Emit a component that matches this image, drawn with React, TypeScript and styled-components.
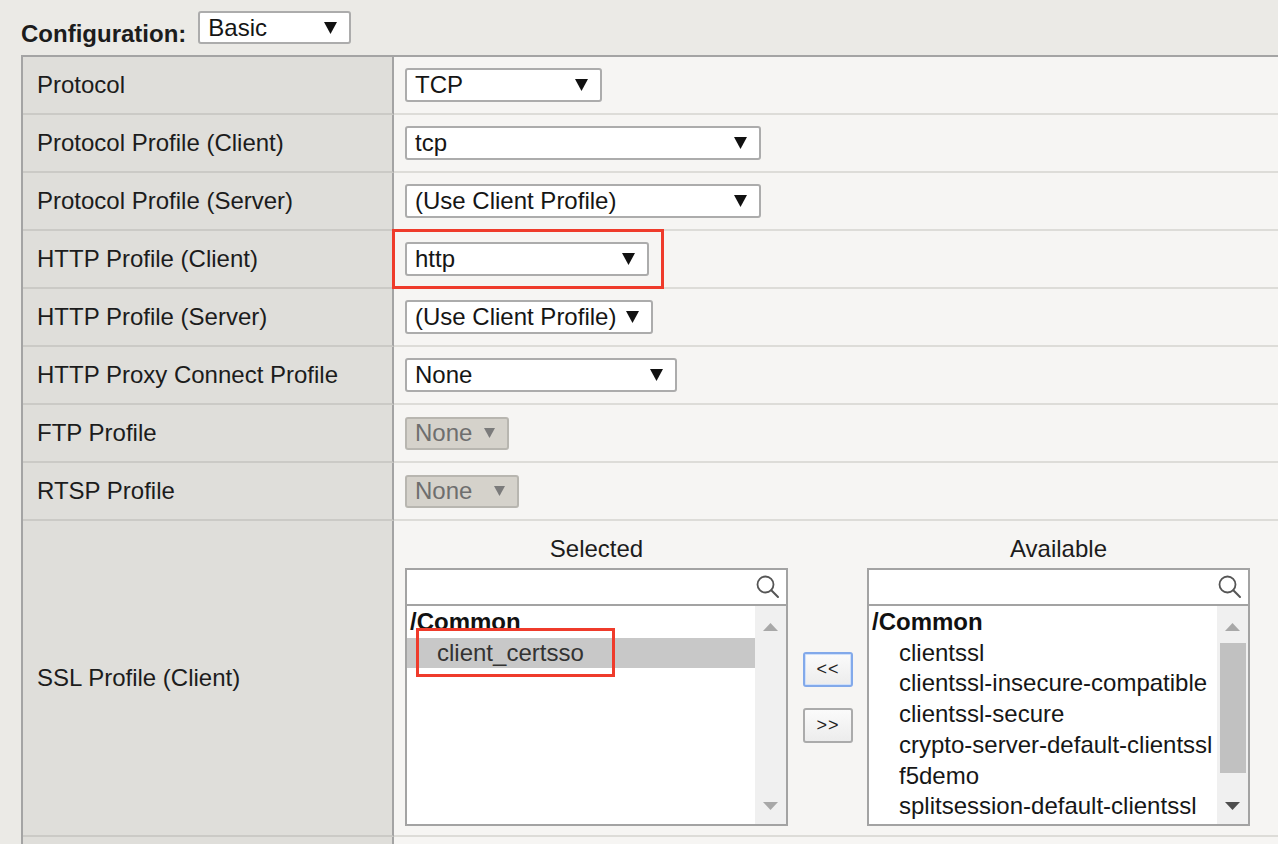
import React from "react";
import styled, { createGlobalStyle } from "styled-components";

const Global = createGlobalStyle`
  html, body {
    margin: 0;
    padding: 0;
    height: 100%;
    overflow: hidden;
    background: #ebeae6;
  }
  body {
    font-family: "Liberation Sans", Arial, sans-serif;
    font-size: 24px;
    color: #1a1a1a;
  }
`;

const Page = styled.div`
  padding: 11px 0 0 21px;
  box-sizing: border-box;
  width: 1278px;
  height: 844px;
  overflow: hidden;
`;

const TopBar = styled.div`
  display: flex;
  align-items: flex-start;
  gap: 12px;
  height: 33px;
`;

const TopLabel = styled.span`
  font-weight: bold;
  line-height: 28px;
  margin-top: 9px;
  color: #1c1c1c;
`;

const Table = styled.div`
  margin-top: 11px;
  border-top: 2px solid #a4a4a4;
  border-left: 2px solid #a4a4a4;
  display: flex;
  flex-direction: column;
`;

const Row = styled.div`
  display: grid;
  grid-template-columns: 371px 1fr;
`;

const LabelCell = styled.div<{ $h: number }>`
  background: #dfdeda;
  border-right: 2px solid #a4a4a4;
  border-bottom: 2px solid #cbcac6;
  min-height: ${(p) => p.$h}px;
  display: flex;
  align-items: center;
  padding-left: 14px;
  color: #1c1c1c;
`;

const ValueCell = styled.div<{ $h: number }>`
  background: #f6f5f3;
  border-bottom: 2px solid #dddcd8;
  min-height: ${(p) => p.$h}px;
  display: flex;
  align-items: center;
  padding-left: 11px;
`;

const SslCell = styled.div`
  background: #f6f5f3;
  border-bottom: 2px solid #dddcd8;
  padding: 14px 0 9px 11px;
  display: flex;
  align-items: flex-start;
`;

const SelectBox = styled.div<{ $w: number; $h?: number; $disabled?: boolean }>`
  box-sizing: border-box;
  width: ${(p) => p.$w}px;
  height: ${(p) => p.$h ?? 34}px;
  display: flex;
  align-items: center;
  justify-content: space-between;
  padding: 0 12px 0 8px;
  border: 2px solid ${(p) => (p.$disabled ? "#b8b6b0" : "#acacac")};
  border-radius: 3px;
  background: ${(p) => (p.$disabled ? "#d5d2cb" : "#ffffff")};
  color: ${(p) => (p.$disabled ? "#6e6e6e" : "#151515")};
  white-space: nowrap;
`;

const Annotated = styled.div`
  position: relative;
  &::after {
    content: "";
    position: absolute;
    top: -13px;
    left: -13px;
    right: -15px;
    bottom: -13px;
    border: 3px solid #ef3b2b;
    pointer-events: none;
  }
`;

const Arrow = ({ disabled }: { disabled?: boolean }) =>
  disabled ? (
    <svg width="11" height="10" viewBox="0 0 11 10">
      <polygon points="0,0 11,0 5.5,10" fill="#7b7b7b" />
    </svg>
  ) : (
    <svg width="13" height="12" viewBox="0 0 13 12">
      <polygon points="0,0 13,0 6.5,12" fill="#111" />
    </svg>
  );

const Select = ({
  value,
  width,
  disabled,
  height,
}: {
  value: string;
  width: number;
  disabled?: boolean;
  height?: number;
}) => (
  <SelectBox $w={width} $disabled={disabled} $h={height}>
    <span>{value}</span>
    <Arrow disabled={disabled} />
  </SelectBox>
);

const DualColumn = styled.div`
  display: flex;
  flex-direction: column;
`;

const ColumnHeader = styled.div`
  height: 28px;
  line-height: 28px;
  margin-bottom: 5px;
  text-align: center;
  color: #1c1c1c;
`;

const ListBox = styled.div`
  box-sizing: border-box;
  width: 383px;
  height: 258px;
  border: 2px solid #a3a3a3;
  background: #fff;
  display: flex;
  flex-direction: column;
`;

const SearchField = styled.div`
  height: 34px;
  border-bottom: 2px solid #a3a3a3;
  display: flex;
  align-items: center;
  justify-content: flex-end;
  padding-right: 5px;
`;

const ListArea = styled.div`
  flex: 1;
  min-height: 0;
  display: flex;
`;

const Items = styled.div`
  flex: 1;
  min-width: 0;
  overflow: hidden;
  padding-top: 1px;
`;

const GroupTitle = styled.div`
  font-weight: bold;
  line-height: 30.7px;
  padding-left: 3px;
  color: #111;
  white-space: nowrap;
`;

const Item = styled.div<{ $selected?: boolean }>`
  position: relative;
  line-height: 30.7px;
  padding-left: 30px;
  white-space: nowrap;
  background: ${(p) => (p.$selected ? "#c8c8c8" : "transparent")};
  color: ${(p) => (p.$selected ? "#333" : "#161616")};
`;

const ItemMark = styled.span`
  position: absolute;
  left: 9px;
  top: -10px;
  width: 199px;
  height: 49px;
  box-sizing: border-box;
  border: 3px solid #ef3b2b;
  pointer-events: none;
`;

const Scrollbar = styled.div`
  width: 31px;
  background: #f0f0f0;
  display: flex;
  flex-direction: column;
  align-items: center;
  padding: 17px 0 14px;
  box-sizing: border-box;
`;

const Thumb = styled.div`
  width: 26px;
  height: 130px;
  margin-top: 12px;
  background: #c1c1c1;
`;

const Spacer = styled.div`
  flex: 1;
`;

const MoveButtons = styled.div`
  display: flex;
  flex-direction: column;
  gap: 21px;
  margin: 33px 14px 0 15px;
  height: 258px;
  justify-content: center;
`;

const MoveButton = styled.div<{ $focused?: boolean }>`
  box-sizing: border-box;
  width: 50px;
  height: 35px;
  border: 2px solid ${(p) => (p.$focused ? "#82a9ea" : "#ababab")};
  border-radius: 3px;
  background: linear-gradient(#fbfbfb, #ececec);
  display: flex;
  align-items: center;
  justify-content: center;
  font-size: 18px;
  letter-spacing: 1px;
  color: #222;
  box-shadow: ${(p) => (p.$focused ? "inset 0 0 0 1px #cfe0fa" : "none")};
`;

const SearchIcon = () => (
  <svg width="26" height="26" viewBox="0 0 26 26">
    <circle cx="10.5" cy="10.5" r="8" fill="none" stroke="#555" strokeWidth="1.8" />
    <line x1="16.3" y1="16.3" x2="23" y2="23" stroke="#555" strokeWidth="2" strokeLinecap="round" />
  </svg>
);

const ScrollArrow = ({ up, dark }: { up?: boolean; dark?: boolean }) => (
  <svg width="15" height="8" viewBox="0 0 15 8">
    <polygon
      points={up ? "0,8 15,8 7.5,0" : "0,0 15,0 7.5,8"}
      fill={dark ? "#4e4e4e" : "#a8a8a8"}
    />
  </svg>
);

const available = [
  "clientssl",
  "clientssl-insecure-compatible",
  "clientssl-secure",
  "crypto-server-default-clientssl",
  "f5demo",
  "splitsession-default-clientssl",
];

const rows: { label: string; node: React.ReactNode }[] = [
  { label: "Protocol", node: <Select value="TCP" width={197} /> },
  { label: "Protocol Profile (Client)", node: <Select value="tcp" width={356} /> },
  {
    label: "Protocol Profile (Server)",
    node: <Select value="(Use Client Profile)" width={356} />,
  },
  {
    label: "HTTP Profile (Client)",
    node: (
      <Annotated>
        <Select value="http" width={244} />
      </Annotated>
    ),
  },
  {
    label: "HTTP Profile (Server)",
    node: <Select value="(Use Client Profile)" width={248} />,
  },
  { label: "HTTP Proxy Connect Profile", node: <Select value="None" width={272} /> },
  { label: "FTP Profile", node: <Select value="None" width={104} height={33} disabled /> },
  { label: "RTSP Profile", node: <Select value="None" width={114} height={33} disabled /> },
];

export default function App() {
  return (
    <Page>
      <Global />
      <TopBar>
        <TopLabel>Configuration:</TopLabel>
        <Select value="Basic" width={153} height={33} />
      </TopBar>
      <Table>
        {rows.map((r) => (
          <Row key={r.label}>
            <LabelCell $h={56}>{r.label}</LabelCell>
            <ValueCell $h={56}>{r.node}</ValueCell>
          </Row>
        ))}
        <Row>
          <LabelCell $h={314}>SSL Profile (Client)</LabelCell>
          <SslCell>
            <DualColumn>
              <ColumnHeader>Selected</ColumnHeader>
              <ListBox>
                <SearchField>
                  <SearchIcon />
                </SearchField>
                <ListArea>
                  <Items>
                    <GroupTitle>/Common</GroupTitle>
                    <Item $selected>
                      client_certsso
                      <ItemMark />
                    </Item>
                  </Items>
                  <Scrollbar>
                    <ScrollArrow up />
                    <Spacer />
                    <ScrollArrow />
                  </Scrollbar>
                </ListArea>
              </ListBox>
            </DualColumn>
            <MoveButtons>
              <MoveButton $focused>&lt;&lt;</MoveButton>
              <MoveButton>&gt;&gt;</MoveButton>
            </MoveButtons>
            <DualColumn>
              <ColumnHeader>Available</ColumnHeader>
              <ListBox>
                <SearchField>
                  <SearchIcon />
                </SearchField>
                <ListArea>
                  <Items>
                    <GroupTitle>/Common</GroupTitle>
                    {available.map((a) => (
                      <Item key={a}>{a}</Item>
                    ))}
                  </Items>
                  <Scrollbar>
                    <ScrollArrow up />
                    <Thumb />
                    <Spacer />
                    <ScrollArrow dark />
                  </Scrollbar>
                </ListArea>
              </ListBox>
            </DualColumn>
          </SslCell>
        </Row>
        <Row>
          <LabelCell $h={56} />
          <ValueCell $h={56} />
        </Row>
      </Table>
    </Page>
  );
}
